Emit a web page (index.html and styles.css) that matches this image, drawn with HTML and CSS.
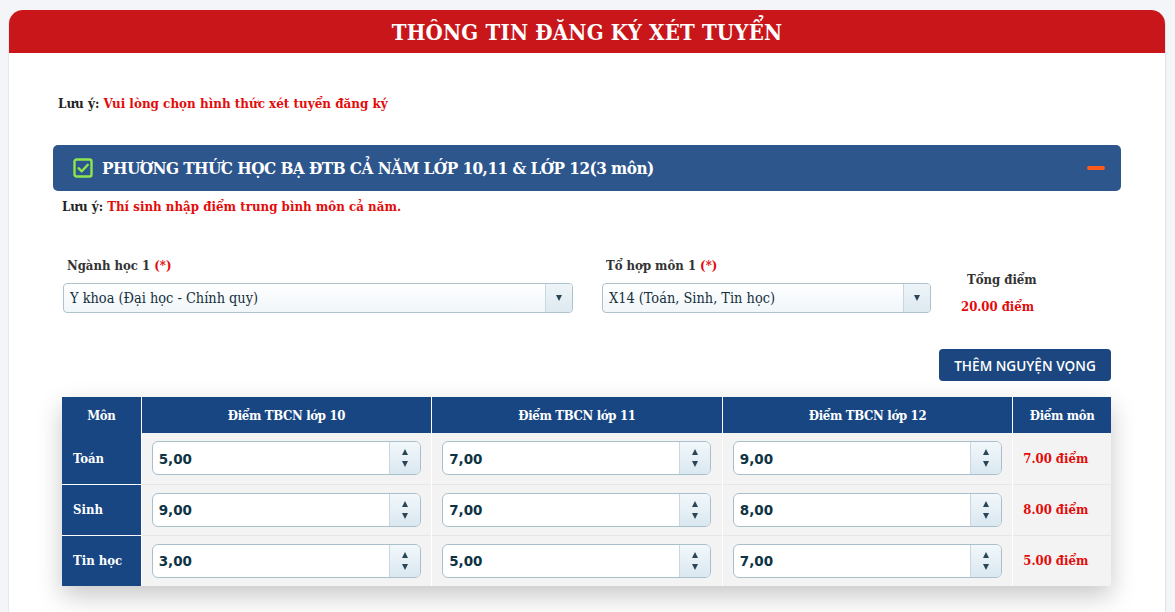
FILE: index.html
```html
<!DOCTYPE html>
<html lang="vi">
<head>
<meta charset="utf-8">
<link rel="stylesheet" href="styles.css">
</head>
<body>
<div class="card">
  <div class="card-head">THÔNG TIN ĐĂNG KÝ XÉT TUYỂN</div>
  <div class="card-body">
    <p class="note note-top">Lưu ý: <span class="red">Vui lòng chọn hình thức xét tuyển đăng ký</span></p>
    <div class="panel">
      <span class="check">
        <svg width="20" height="20" viewBox="0 0 20 20"><rect x="1.5" y="1.5" width="17" height="17" rx="2" fill="none" stroke="#8ee64d" stroke-width="2.4"/><path d="M5.5 10.2 L8.8 13.3 L14.8 6.8" fill="none" stroke="#8ee64d" stroke-width="2.4" stroke-linecap="round" stroke-linejoin="round"/></svg>
      </span>
      <span class="panel-title">PHƯƠNG THỨC HỌC BẠ ĐTB CẢ NĂM LỚP 10,11 &amp; LỚP 12(3 môn)</span>
      <span class="minus"></span>
    </div>
    <p class="note note-2">Lưu ý: <span class="red">Thí sinh nhập điểm trung bình môn cả năm.</span></p>

    <div class="form-row">
      <div class="field f1">
        <label class="lbl">Ngành học 1 <span class="red">(*)</span></label>
        <div class="select"><span class="sel-text">Y khoa (Đại học - Chính quy)</span><span class="sel-btn"><i class="tri-down"></i></span></div>
      </div>
      <div class="field f2">
        <label class="lbl">Tổ hợp môn 1 <span class="red">(*)</span></label>
        <div class="select"><span class="sel-text">X14 (Toán, Sinh, Tin học)</span><span class="sel-btn"><i class="tri-down"></i></span></div>
      </div>
      <div class="total">
        <div class="total-lbl">Tổng điểm</div>
        <div class="total-val">20.00 điểm</div>
      </div>
    </div>

    <div class="btn-row"><button class="btn">THÊM NGUYỆN VỌNG</button></div>

    <table class="grid">
      <thead>
        <tr><th class="c-mon">Môn</th><th>Điểm TBCN lớp 10</th><th>Điểm TBCN lớp 11</th><th>Điểm TBCN lớp 12</th><th class="c-sc">Điểm môn</th></tr>
      </thead>
      <tbody>
        <tr>
          <td class="subj">Toán</td>
          <td><div class="spin"><span class="val">5,00</span><span class="arrows"><i class="tri-up"></i><i class="tri-down"></i></span></div></td>
          <td><div class="spin"><span class="val">7,00</span><span class="arrows"><i class="tri-up"></i><i class="tri-down"></i></span></div></td>
          <td><div class="spin"><span class="val">9,00</span><span class="arrows"><i class="tri-up"></i><i class="tri-down"></i></span></div></td>
          <td class="score">7.00 điểm</td>
        </tr>
        <tr>
          <td class="subj">Sinh</td>
          <td><div class="spin"><span class="val">9,00</span><span class="arrows"><i class="tri-up"></i><i class="tri-down"></i></span></div></td>
          <td><div class="spin"><span class="val">7,00</span><span class="arrows"><i class="tri-up"></i><i class="tri-down"></i></span></div></td>
          <td><div class="spin"><span class="val">8,00</span><span class="arrows"><i class="tri-up"></i><i class="tri-down"></i></span></div></td>
          <td class="score">8.00 điểm</td>
        </tr>
        <tr>
          <td class="subj">Tin học</td>
          <td><div class="spin"><span class="val">3,00</span><span class="arrows"><i class="tri-up"></i><i class="tri-down"></i></span></div></td>
          <td><div class="spin"><span class="val">5,00</span><span class="arrows"><i class="tri-up"></i><i class="tri-down"></i></span></div></td>
          <td><div class="spin"><span class="val">7,00</span><span class="arrows"><i class="tri-up"></i><i class="tri-down"></i></span></div></td>
          <td class="score">5.00 điểm</td>
        </tr>
      </tbody>
    </table>
  </div>
</div>
</body>
</html>
```
FILE: styles.css
```css
* { box-sizing: border-box; }
html, body { margin: 0; padding: 0; }
body {
  background: #f4f5f9;
  font-family: "DejaVu Serif", "Liberation Serif", serif;
  font-stretch: condensed;
  color: #222;
  overflow: hidden;
  height: 612px;
}
.card {
  margin: 10px 9px 0 8px;
  background: #fff;
  border-radius: 14px 14px 0 0;
  border-right: 1px solid #e2e3e8;
  border-left: 1px solid #e8e9ee;
  height: 620px;
}
.card-head {
  height: 43px;
  background: #c8161b;
  border-radius: 14px 14px 0 0;
  color: #fff;
  text-align: center;
  font-size: 22px;
  line-height: 45px;
  font-weight: bold;
  letter-spacing: 0.2px;
}
.card-body { padding: 0 44px 0 44px; }
.note {
  margin: 0;
  font-size: 13.3px;
  font-weight: bold;
  color: #222;
}
.red { color: #e30c0c; }
.note-top { padding: 42px 0 0 5px; line-height: 18px; }
.panel {
  margin-top: 32px;
  height: 46px;
  background: #2d568c;
  border-radius: 5px;
  display: flex;
  align-items: center;
  padding: 0 16px 0 20px;
}
.check { display: flex; width: 20px; height: 20px; }
.panel-title {
  margin-left: 9px;
  color: #fff;
  font-weight: bold;
  font-size: 17px;
  flex: 1;
  letter-spacing: -0.53px;
}
.minus {
  width: 18px;
  height: 4px;
  background: #ff5a1a;
  border-radius: 2px;
}
.note-2 { padding: 7px 0 0 9px; line-height: 18px; font-size: 13.2px; }
.form-row {
  display: flex;
  margin-top: 42px;
  padding-left: 10px;
}
.field { display: flex; flex-direction: column; }
.f1 { width: 510px; }
.f2 { width: 329px; margin-left: 29px; }
.lbl {
  font-size: 13px;
  font-weight: bold;
  color: #333;
  padding-left: 4px;
  line-height: 16px;
}
.select {
  margin-top: 9px;
  height: 30px;
  border: 1px solid #aec2cd;
  border-radius: 4px;
  background: linear-gradient(#ffffff, #f1f6f9);
  display: flex;
  align-items: center;
}
.sel-text {
  flex: 1;
  padding-left: 6px;
  font-size: 14.4px;
  color: #14303e;
}
.sel-btn {
  width: 27px;
  height: 100%;
  border-left: 1px solid #c9d8e0;
  background: linear-gradient(#eef5f9, #dde9f0);
  display: flex;
  align-items: center;
  justify-content: center;
  border-radius: 0 3px 3px 0;
}
.tri-down, .tri-up {
  display: block;
  width: 0; height: 0;
  border-left: 3.5px solid transparent;
  border-right: 3.5px solid transparent;
}
.tri-down { border-top: 6px solid #2a4656; }
.tri-up { border-bottom: 6px solid #2a4656; }
.total { margin-left: 30px; padding-top: 14px; height: 55px; }
.total-lbl {
  font-size: 13px; font-weight: bold; color: #333;
  padding-left: 6px;
  line-height: 16px;
}
.total-val {
  margin-top: 11px;
  font-size: 13px; font-weight: bold; color: #e30c0c;
  line-height: 16px;
}
.btn-row {
  display: flex;
  justify-content: flex-end;
  margin-top: 36px;
  padding-right: 10px;
}
.btn {
  width: 172px;
  height: 32px;
  border: 0;
  border-radius: 4px;
  background: #1c4680;
  color: #fff;
  font-family: "Open Sans", "Noto Sans", sans-serif;
  font-stretch: normal;
  font-weight: 600;
  font-size: 13.6px;
}
.grid {
  margin: 16px 0 0 9px;
  width: 1049px;
  border-collapse: collapse;
  table-layout: fixed;
  box-shadow: 0 10px 24px rgba(0,0,0,0.22);
}
.grid th {
  height: 36px;
  background: #174683;
  color: #fff;
  font-size: 13px;
  font-weight: bold;
  border-left: 1px solid #fff;
  width: 290px;
  letter-spacing: -0.3px;
}
.grid th:first-child { border-left: 0; }
.grid th.c-mon { width: 79px; }
.grid th.c-sc { width: 98px; }
.grid td {
  height: 51px;
  background: #f3f3f3;
  border-left: 1px solid #fff;
  border-top: 1px solid #e6e6e6;
  padding: 0 10px 0 10px;
}
.grid td.subj {
  background: #174683;
  color: #fff;
  font-weight: bold;
  font-size: 13px;
  border-left: 0;
  border-top: 1px solid #fff;
  padding-left: 11px;
}
.grid tbody tr:first-child td { border-top: 0; }
.grid td.score {
  color: #e30c0c;
  font-weight: bold;
  font-size: 13px;
}
.spin {
  height: 34px;
  width: 269px;
  border: 1px solid #a9bfcb;
  border-radius: 6px;
  background: #fff;
  display: flex;
  align-items: center;
  overflow: hidden;
}
.val {
  flex: 1;
  padding-left: 6px;
  padding-top: 1px;
  font-family: "DejaVu Sans", "Liberation Sans", sans-serif;
  font-stretch: normal;
  font-weight: bold;
  font-size: 13.5px;
  color: #0e3444;
}
.arrows {
  width: 31px;
  height: 100%;
  border-left: 1px solid #c9d8e0;
  background: linear-gradient(#f2f8fb, #dae8f0);
  display: flex;
  flex-direction: column;
  align-items: center;
  justify-content: center;
  gap: 6px;
}
```
